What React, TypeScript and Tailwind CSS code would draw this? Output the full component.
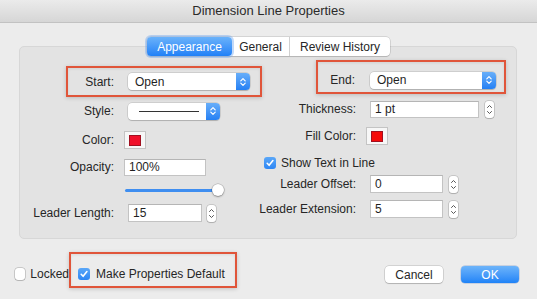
import React from 'react'

const Chevrons = ({ color = '#fff' }: { color?: string }) => (
  <svg width="8" height="12" viewBox="0 0 8 12" fill="none">
    <path d="M1.8 4.8 L4 2.6 L6.2 4.8" stroke={color} strokeWidth="1.2" strokeLinecap="round" strokeLinejoin="round" />
    <path d="M1.8 7.2 L4 9.4 L6.2 7.2" stroke={color} strokeWidth="1.2" strokeLinecap="round" strokeLinejoin="round" />
  </svg>
)

const Check = () => (
  <svg width="10" height="10" viewBox="0 0 10 10" fill="none">
    <path d="M2.2 5.3 L4.1 7.3 L7.9 2.6" stroke="#fff" strokeWidth="1.6" strokeLinecap="round" strokeLinejoin="round" />
  </svg>
)

const Select = ({ className, children }: { className: string; children?: React.ReactNode }) => (
  <div className={`flex h-[17px] rounded-[4px] bg-white shadow-[0_0_0_0.5px_rgba(0,0,0,0.18),0_1px_1px_rgba(0,0,0,0.15)] overflow-hidden ${className}`}>
    <div className="flex-1 flex items-center pl-[7px] text-[12px] text-[#1f1f1f]">{children}</div>
    <div className="w-[14px] flex items-center justify-center bg-linear-to-b from-[#67aef9] to-[#2480f4]">
      <Chevrons />
    </div>
  </div>
)

const Input = ({ className, value }: { className: string; value: string }) => (
  <div className={`flex items-center bg-white border border-[#c3c3c3] border-t-[#b5b5b5] pl-[4px] text-[12px] text-[#1f1f1f] ${className}`}>
    {value}
  </div>
)

const Stepper = ({ className }: { className: string }) => (
  <div className={`w-[9px] h-[17px] flex items-center justify-center rounded-[3px] bg-white shadow-[0_0_0_0.5px_rgba(0,0,0,0.25),0_1px_1px_rgba(0,0,0,0.12)] ${className}`}>
    <svg width="7" height="13" viewBox="0 0 7 13" fill="none">
      <path d="M1.5 4.5 L3.5 2.5 L5.5 4.5" stroke="#555" strokeWidth="1" strokeLinecap="round" strokeLinejoin="round" />
      <path d="M1.5 8.5 L3.5 10.5 L5.5 8.5" stroke="#555" strokeWidth="1" strokeLinecap="round" strokeLinejoin="round" />
    </svg>
  </div>
)

const Swatch = ({ className, color }: { className: string; color: string }) => (
  <div className={`w-[22px] h-[18px] flex items-center justify-center bg-[#f7f7f7] border border-[#c4c4c4] ${className}`}>
    <div className="w-[12px] h-[11px] border border-[#a01020]" style={{ backgroundColor: color }} />
  </div>
)

const Checkbox = ({ checked, className = '' }: { checked: boolean; className?: string }) =>
  checked ? (
    <div className={`w-[12px] h-[12px] rounded-[3px] flex items-center justify-center bg-linear-to-b from-[#5aa7f8] to-[#2d86f4] ${className}`}>
      <Check />
    </div>
  ) : (
    <div className={`w-[12px] h-[12px] rounded-[3px] bg-white shadow-[0_0_0_0.5px_rgba(0,0,0,0.3),0_1px_1px_rgba(0,0,0,0.1)] ${className}`} />
  )

// right-aligned label; long text spills to the left instead of wrapping
const Label = ({ className, children }: { className: string; children: React.ReactNode }) => (
  <div className={`flex justify-end whitespace-nowrap ${className}`}>{children}</div>
)

const annotation = 'border-2 border-[#e0553a] shadow-[0_1px_4px_rgba(0,0,0,0.18),inset_0_1px_3px_rgba(0,0,0,0.08)]'

export default function App() {
  return (
    <div className="w-[537px] h-[299px] flex flex-col overflow-hidden bg-[#ececec] font-['Liberation_Sans',Arial,sans-serif] text-[12px] text-[#262626]">
      <div className="h-[23px] shrink-0 flex items-center justify-center bg-linear-to-b from-[#ebebeb] to-[#d6d6d6] border-b border-[#c2c2c2] text-[13px] text-[#2a2a2a]">
        Dimension Line Properties
      </div>

      <div className="pt-[14px] pl-[19px] pr-[20px]">
        <div className="relative z-10 flex justify-center h-[19px] pl-[1px]">
          <div className="flex h-[19px] rounded-[4px] bg-white shadow-[0_0_0_0.5px_rgba(0,0,0,0.2),0_1px_1px_rgba(0,0,0,0.12)]">
            <div className="w-[85px] flex items-center justify-center rounded-[4px] text-white bg-linear-to-b from-[#6ab2fa] to-[#1e80f7] shadow-[0_0_0_2px_rgba(120,170,240,0.45)]">
              Appearance
            </div>
            <div className="w-[58px] flex items-center justify-center border-r border-[#d0d0d0]">General</div>
            <div className="w-[100px] flex items-center justify-center">Review History</div>
          </div>
        </div>

        <div className="-mt-[10px] h-[193px] flex rounded-[5px] bg-[#e3e3e3] border border-[#d7d7d7]">
          {/* left column */}
          <div className="w-[243px] flex flex-col">
            <div className={`mt-[19px] ml-[46px] w-[196px] h-[31px] flex items-center pr-[10px] ${annotation}`}>
              <Label className="w-[46px]">Start:</Label>
              <Select className="ml-[14px] w-[122px]">Open</Select>
            </div>
            <div className="mt-[5px] flex items-center">
              <Label className="w-[94px]">Style:</Label>
              <Select className="ml-[14px] w-[92px]">
                <div className="ml-[4px] w-[60px] h-px bg-[#333]" />
              </Select>
            </div>
            <div className="mt-[11px] flex items-center">
              <Label className="w-[94px]">Color:</Label>
              <Swatch className="ml-[10px]" color="#f0102a" />
            </div>
            <div className="mt-[9px] flex items-center">
              <Label className="w-[94px]">Opacity:</Label>
              <Input className="ml-[10px] w-[82px] h-[17px]" value="100%" />
            </div>
            <div className="mt-[8px] flex items-center h-[12px]">
              <div className="w-[94px]" />
              <div className="relative ml-[11px] w-[99px] h-[12px] flex items-center">
                <div className="w-[93px] h-[3px] rounded-full bg-[#3f8ef0]" />
                <div className="absolute right-0 top-0 w-[12px] h-[12px] rounded-full bg-white shadow-[0_0_0_0.5px_rgba(0,0,0,0.25),0_1px_2px_rgba(0,0,0,0.3)]" />
              </div>
            </div>
            <div className="mt-[8px] flex items-center">
              <Label className="w-[94px]">Leader Length:</Label>
              <Input className="ml-[14px] w-[74px] h-[18px]" value="15" />
              <Stepper className="ml-[5px]" />
            </div>
          </div>

          {/* right column */}
          <div className="flex-1 flex flex-col">
            <div className={`mt-[13px] ml-[53px] w-[190px] h-[34px] flex items-end pb-[3px] pr-[8px] ${annotation}`}>
              <div className="flex items-center">
                <Label className="w-[37px]">End:</Label>
                <Select className="ml-[15px] w-[126px]">Open</Select>
              </div>
            </div>
            <div className="mt-[6px] flex items-center">
              <Label className="w-[93px]">Thickness:</Label>
              <Input className="ml-[14px] w-[109px] h-[17px]" value="1 pt" />
              <Stepper className="ml-[6px]" />
            </div>
            <div className="mt-[9px] flex items-center">
              <Label className="w-[93px]">Fill Color:</Label>
              <Swatch className="ml-[10px]" color="#f50a0a" />
            </div>
            <div className="mt-[12px] flex items-center h-[12px]">
              <Checkbox checked className="ml-[1px]" />
              <div className="ml-[5px]">Show Text in Line</div>
            </div>
            <div className="mt-[6px] flex items-center">
              <Label className="w-[93px]">Leader Offset:</Label>
              <Input className="ml-[14px] w-[73px] h-[18px]" value="0" />
              <Stepper className="ml-[6px]" />
            </div>
            <div className="mt-[7px] flex items-center">
              <Label className="w-[93px]">Leader Extension:</Label>
              <Input className="ml-[14px] w-[73px] h-[18px]" value="5" />
              <Stepper className="ml-[6px]" />
            </div>
          </div>
        </div>
      </div>

      <div className="mt-[13px] flex items-start">
        <div className="ml-[15px] w-[54px] mt-[16px] flex items-center h-[12px] whitespace-nowrap">
          <Checkbox checked={false} />
          <div className="ml-[5px]">Locked</div>
        </div>
        <div className={`relative w-[168px] h-[36px] pl-[7px] pt-[14px] ${annotation}`}>
          <div className="flex items-center h-[12px]">
            <Checkbox checked />
            <div className="ml-[6px] whitespace-nowrap">Make Properties Default</div>
          </div>
        </div>
        <div className="flex-1" />
        <div className="mt-[14px] w-[58px] h-[17px] flex items-center justify-center rounded-[4px] bg-white shadow-[0_0_0_0.5px_rgba(0,0,0,0.22),0_1px_1px_rgba(0,0,0,0.15)]">
          Cancel
        </div>
        <div className="mt-[14px] ml-[18px] mr-[18px] w-[58px] h-[17px] flex items-center justify-center rounded-[4px] text-white bg-linear-to-b from-[#6cb4fa] to-[#1e83f7] shadow-[0_0_0_0.5px_rgba(0,60,160,0.3)]">
          OK
        </div>
      </div>
    </div>
  )
}
